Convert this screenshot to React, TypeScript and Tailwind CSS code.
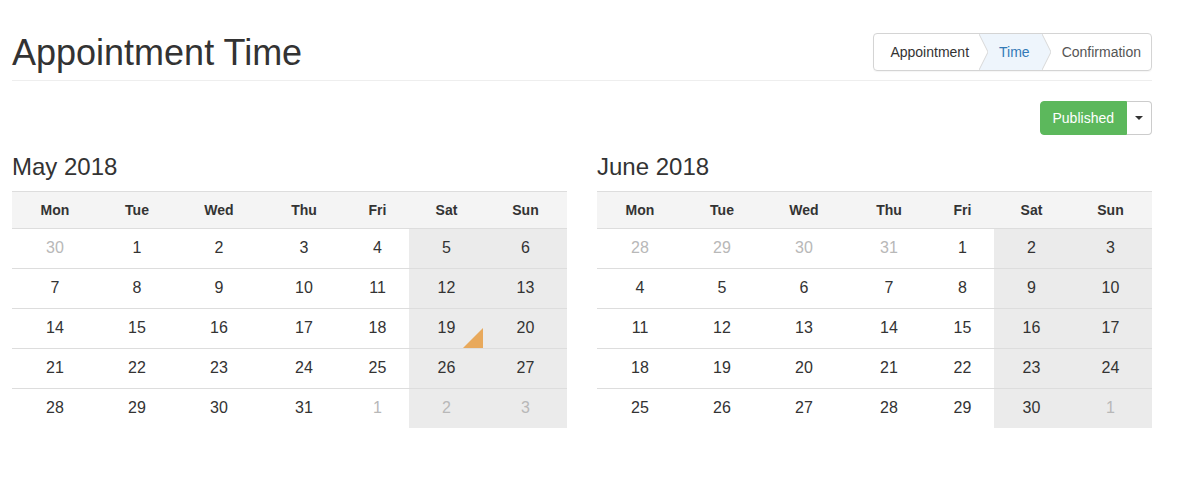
import { Fragment } from 'react';

type Day = { n: number; muted?: boolean; mark?: boolean };

const DAYS = ['Mon', 'Tue', 'Wed', 'Thu', 'Fri', 'Sat', 'Sun'];

const range = (a: number, b: number, muted = false): Day[] =>
  Array.from({ length: b - a + 1 }, (_, i) => ({ n: a + i, muted }));

const MAY: Day[][] = [
  [{ n: 30, muted: true }, ...range(1, 6)],
  range(7, 13),
  [...range(14, 18), { n: 19, mark: true }, { n: 20 }],
  range(21, 27),
  [...range(28, 31), ...range(1, 3, true)],
];

const JUNE: Day[][] = [
  [...range(28, 31, true), ...range(1, 3)],
  range(4, 10),
  range(11, 17),
  range(18, 24),
  [...range(25, 30), { n: 1, muted: true }],
];

function Chevron({ fill }: { fill: 'left' | 'right' }) {
  return (
    <svg width="9" height="36" viewBox="0 0 9 36" className="shrink-0 block">
      {fill === 'right' ? (
        <polygon points="0,0 9,0 9,36 0,36 9,18" fill="#eef5fc" />
      ) : (
        <polygon points="0,0 9,18 0,36" fill="#eef5fc" />
      )}
      <polyline points="0,0 9,18 0,36" fill="none" stroke="#d8d8d8" strokeWidth="1" />
    </svg>
  );
}

function Month({ title, weeks }: { title: string; weeks: Day[][] }) {
  return (
    <div className="w-[555px]">
      <h2 className="text-[24px] leading-[26px] text-[#333] mb-[11px]">{title}</h2>
      <div className="grid grid-cols-[86px_78px_86px_84px_63px_75px_83px] text-[#333]">
        {DAYS.map(d => (
          <div key={d} className="h-[38px] flex items-center justify-center bg-[#f4f4f4] border-y border-[#ddd] text-[14px] font-bold">
            {d}
          </div>
        ))}
        {weeks.map((w, wi) => (
          <Fragment key={wi}>
            {w.map((d, di) => (
              <div
                key={di}
                className={`relative flex items-center justify-center text-[16px] ${
                  wi < weeks.length - 1 ? 'h-10 pb-[2px] border-b border-[#ddd]' : 'h-[39px] pb-[1px]'
                } ${di >= 5 ? 'bg-[#ebebeb]' : ''} ${d.muted ? 'text-[#b8b8b8]' : ''}`}
              >
                {d.n}
                {d.mark && (
                  <span className="absolute right-[1px] bottom-0 w-5 h-5 bg-[#e8a95c] [clip-path:polygon(100%_0,100%_100%,0_100%)]" />
                )}
              </div>
            ))}
          </Fragment>
        ))}
      </div>
    </div>
  );
}

export default function App() {
  return (
    <div className="bg-white min-h-screen font-['Liberation_Sans',Arial,sans-serif] text-[#333]">
      <div className="w-[1140px] ml-3 pt-[33px]">
        {/* Header */}
        <div className="flex items-start justify-between border-b border-[#eee] pb-[7px]">
          <h1 className="text-[36px] leading-[40px]">Appointment Time</h1>
          <div className="flex items-stretch h-[38px] border border-[#d4d4d4] rounded-[4px] text-[14px] overflow-hidden shadow-[0_1px_1px_rgba(0,0,0,0.04)]">
            <div className="flex items-center pl-4 pr-[10px] text-[#333]">Appointment</div>
            <Chevron fill="right" />
            <div className="flex items-center pl-[11px] pr-[12px] bg-[#eef5fc] text-[#337ab7]">Time</div>
            <Chevron fill="left" />
            <div className="flex items-center pl-[11px] pr-[10px] text-[#555]">Confirmation</div>
          </div>
        </div>

        {/* Status */}
        <div className="flex justify-end mt-5">
          <div className="flex h-[34px] text-[14px]">
            <button className="px-3 bg-[#5cb85c] text-white rounded-l-[4px] border border-[#5cb85c]">Published</button>
            <button className="w-[25px] flex items-center justify-center bg-white border border-[#ccc] border-l-0 rounded-r-[4px]">
              <span className="w-0 h-0 border-x-4 border-x-transparent border-t-4 border-t-[#333]" />
            </button>
          </div>
        </div>

        {/* Calendars */}
        <div className="flex gap-[30px] mt-[19px]">
          <Month title="May 2018" weeks={MAY} />
          <Month title="June 2018" weeks={JUNE} />
        </div>
      </div>
    </div>
  );
}
